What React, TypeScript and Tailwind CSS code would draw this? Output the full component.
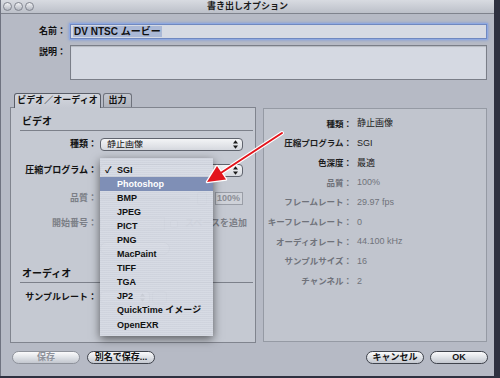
import React from "react";

function Arrows() {
  return (
    <svg width="5" height="9" viewBox="0 0 5 9" className="shrink-0">
      <path d="M2.5 0.3 L5 3.6 L0 3.6 Z" fill="#1a1a1a" />
      <path d="M2.5 8.7 L5 5.4 L0 5.4 Z" fill="#1a1a1a" />
    </svg>
  );
}

function Popup({ width, text, dim }: { width: string; text: string; dim?: boolean }) {
  return (
    <div
      className={`${width} h-[13px] rounded-[4px] border ${dim ? "border-[#9a9ea7] text-[#8a8d94]" : "border-[#60646e] text-[#111]"} bg-gradient-to-b from-[#f3f4f6] to-[#d6d9df] flex items-center pl-[6px] pr-[4px] text-[9px] leading-none`}
    >
      <span className="flex-1 truncate">{text}</span>
      <Arrows />
    </div>
  );
}

function Pill({ width, text, dim }: { width: string; text: string; dim?: boolean }) {
  return (
    <div
      className={`${width} h-[13px] rounded-full border ${dim ? "border-[#8e929b] text-[#8e929b]" : "border-[#3f434c] text-[#111]"} bg-gradient-to-b from-[#fbfbfc] via-[#dfe2e7] to-[#c3c7cf] flex items-center justify-center text-[9px] leading-none font-bold whitespace-nowrap`}
    >
      {text}
    </div>
  );
}

const menuItems = [
  "SGI",
  "Photoshop",
  "BMP",
  "JPEG",
  "PICT",
  "PNG",
  "MacPaint",
  "TIFF",
  "TGA",
  "JP2",
  "QuickTime イメージ",
  "OpenEXR",
];

const infoRows: { label: string; value: string; dark: boolean }[] = [
  { label: "種類：", value: "静止画像", dark: true },
  { label: "圧縮プログラム：", value: "SGI", dark: true },
  { label: "色深度：", value: "最適", dark: true },
  { label: "品質：", value: "100%", dark: false },
  { label: "フレームレート：", value: "29.97 fps", dark: false },
  { label: "キーフレームレート：", value: "0", dark: false },
  { label: "オーディオレート：", value: "44.100 kHz", dark: false },
  { label: "サンプルサイズ：", value: "16", dark: false },
  { label: "チャンネル：", value: "2", dark: false },
];

export default function App() {
  return (
    <div className="w-[500px] h-[378px] bg-[#2e3140] flex overflow-hidden font-['Liberation_Sans','Noto_Sans_CJK_JP',sans-serif] text-[#111]">
      <div className="relative w-[494px] h-[376px] bg-[#b6bac5] flex flex-col border-l border-[#6f7380]">
        {/* title bar */}
        <div className="h-[14px] shrink-0 flex items-center bg-gradient-to-b from-[#d8dbe1] to-[#bcc0c9] border-b border-[#7f838d]">
          <div className="w-[36px] flex gap-[2px] pl-[2px]">
            <div className="w-[9px] h-[9px] rounded-full border border-[#80848e] bg-gradient-to-b from-[#f2f3f5] to-[#b3b7c0]" />
            <div className="w-[9px] h-[9px] rounded-full border border-[#80848e] bg-gradient-to-b from-[#f2f3f5] to-[#b3b7c0]" />
            <div className="w-[9px] h-[9px] rounded-full border border-[#80848e] bg-gradient-to-b from-[#f2f3f5] to-[#b3b7c0]" />
          </div>
          <div className="flex-1 text-center text-[9px] font-bold leading-none text-[#1a1a1a]">書き出しオプション</div>
          <div className="w-[36px]" />
        </div>

        {/* name */}
        <div className="mt-[10px] flex items-center h-[15px]">
          <div className="w-[65px] text-right text-[9px] font-bold leading-none">名前：</div>
          <div className="ml-[4px] mr-[7px] flex-1 h-[15px] border border-[#6f88c0] bg-[#d6dae3] shadow-[0_0_0_1px_#8fa9e0,0_0_3px_1px_#7d9ad8] flex items-center pl-[2px]">
            <span className="bg-[#aab8d6] px-[1px] text-[10px] font-bold leading-[11px]">DV NTSC ムービー</span>
          </div>
        </div>

        {/* description */}
        <div className="mt-[6px] flex h-[35px]">
          <div className="w-[65px] text-right text-[9px] font-bold leading-none pt-[3px]">説明：</div>
          <div className="ml-[4px] mr-[7px] flex-1 h-[35px] border border-[#7a7e88] bg-[#d5d9e2] shadow-[inset_0_1px_1px_rgba(0,0,0,0.15)]" />
        </div>

        {/* tabs */}
        <div className="mt-[12px] h-[15px] flex items-end pl-[13px] gap-[2px] relative z-10">
          <div className="w-[87px] h-[15px] rounded-t-[3px] border border-b-0 border-[#5a5e68] bg-gradient-to-b from-[#d4d7de] to-[#c5c9d2] flex items-center justify-center text-[9px] font-bold leading-none -mb-px pb-px">
            ビデオ／オーディオ
          </div>
          <div className="w-[29px] h-[14px] rounded-t-[3px] border border-b-0 border-[#6e727c] bg-gradient-to-b from-[#c3c7cf] to-[#aeb2bc] flex items-center justify-center text-[9px] font-bold leading-none">
            出力
          </div>
        </div>

        {/* panels */}
        <div className="h-[236px] flex pl-[9px]">
          {/* left panel */}
          <div className="w-[246px] h-[236px] border border-[#80848e] bg-[#c5c9d2] pl-[9px] pr-[2px] flex flex-col">
            <div className="mt-[6px] h-[17px] border-b border-[#7c808a] pl-[2px] text-[10px] font-bold leading-[16px]">ビデオ</div>

            <div className="mt-[7px] h-[13px] flex items-center">
              <div className="w-[77px] text-right text-[9px] font-bold leading-none">種類：</div>
              <div className="ml-[3px]"><Popup width="w-[143px]" text="静止画像" /></div>
            </div>

            <div className="mt-[13px] h-[13px] flex items-center">
              <div className="w-[77px] text-right text-[9px] font-bold leading-none whitespace-nowrap">圧縮プログラム：</div>
              <div className="ml-[3px]"><Popup width="w-[143px]" text="" /></div>
            </div>

            <div className="mt-[15px] h-[13px] flex items-center">
              <div className="w-[77px] text-right text-[9px] font-bold leading-none text-[#7b7e86]">品質：</div>
              <div className="ml-[3px] w-[90px] h-[3px] rounded-full bg-[#9da1aa]" />
              <div className="ml-[7px] w-[10px] h-[13px] border border-[#9da1aa] rounded-[2px]" />
              <div className="ml-[8px] w-[28px] h-[13px] border border-[#9a9ea7] bg-[#cfd2d9] text-right pr-[2px] text-[9px] font-bold leading-[11px] text-[#8b8e95]">100%</div>
            </div>

            <div className="mt-[12px] h-[13px] flex items-center">
              <div className="w-[77px] text-right text-[9px] font-bold leading-none text-[#7b7e86]">開始番号：</div>
              <div className="ml-[3px] w-[65px] h-[13px] border border-[#9a9ea7] bg-[#cfd2d9]" />
              <div className="ml-[5px] w-[8px] h-[8px] border border-[#9a9ea7] rounded-[2px] bg-[#d8dbe1]" />
              <div className="ml-[7px] text-[9px] font-bold leading-none text-[#7b7e86] whitespace-nowrap">スペースを追加</div>
            </div>

            <div className="mt-[12px] h-[13px] flex items-center">
              <div className="ml-[80px]"><Pill width="w-[70px]" text="" dim /></div>
            </div>

            <div className="mt-[11px] h-[17px] border-b border-[#7c808a] pl-[2px] text-[10px] font-bold leading-[16px]">オーディオ</div>

            <div className="mt-[8px] h-[13px] flex items-center">
              <div className="w-[77px] text-right text-[9px] font-bold leading-none whitespace-nowrap">サンプルレート：</div>
              <div className="ml-[3px]"><Popup width="w-[50px]" text="" dim /></div>
              <div className="ml-[2px] w-[15px] h-[13px] border border-[#9a9ea7] rounded-[3px]" />
            </div>
          </div>

          {/* right panel */}
          <div className="ml-[7px] mt-[1px] w-[224px] h-[234px] border border-[#959aa4] bg-[#c1c5ce] pt-[5px] flex flex-col">
            {infoRows.map((r) => (
              <div key={r.label} className="h-[19.7px] flex items-center leading-none">
                <div className={`w-[88px] text-right font-bold whitespace-nowrap text-[8.5px] ${r.dark ? "text-[#1c1c1c]" : "text-[#6f727a]"}`}>{r.label}</div>
                <div className={`ml-[5px] text-[9px] ${r.dark ? "text-[#222]" : "text-[#70737b]"}`}>{r.value}</div>
              </div>
            ))}
          </div>
        </div>

        {/* buttons */}
        <div className="mt-[8px] h-[13px] flex items-center pl-[11px] pr-[6px]">
          <Pill width="w-[68px]" text="保存" dim />
          <div className="ml-[7px]"><Pill width="w-[68px]" text="別名で保存..." /></div>
          <div className="flex-1" />
          <Pill width="w-[58px]" text="キャンセル" />
          <div className="ml-[6px]"><Pill width="w-[58px]" text="OK" /></div>
        </div>

        {/* popup menu */}
        <div className="absolute left-[99px] top-[158px] w-[113px] h-[178px] pt-[5px] bg-[repeating-linear-gradient(0deg,rgba(216,220,229,0.94)_0px,rgba(216,220,229,0.94)_1px,rgba(208,212,222,0.94)_1px,rgba(208,212,222,0.94)_2px)] shadow-[0_3px_9px_rgba(0,0,0,0.55)] flex flex-col">
          {menuItems.map((m, i) => (
            <div
              key={m}
              className={`h-[14.1px] flex items-center text-[9px] font-bold leading-none whitespace-nowrap ${i === 1 ? "bg-[#7f8fb6] text-white" : "text-[#111]"}`}
            >
              <span className="w-[17px] pl-[5px] text-[9px]">{i === 0 ? "✓" : ""}</span>
              <span>{m}</span>
            </div>
          ))}
        </div>

        {/* red arrow */}
        <svg className="absolute left-[-1px] top-0 pointer-events-none" width="494" height="376" viewBox="0 0 494 376">
          <line x1="282" y1="133" x2="220" y2="173.5" stroke="#ffffff" strokeWidth="4" strokeLinecap="round" />
          <polygon points="207,182 226,179.5 217,166" fill="#ffffff" stroke="#ffffff" strokeWidth="2.5" strokeLinejoin="round" />
          <line x1="282" y1="133" x2="220" y2="173.5" stroke="#e3141c" strokeWidth="2" strokeLinecap="round" />
          <polygon points="207,182 226,179.5 217,166" fill="#e3141c" />
        </svg>
      </div>
    </div>
  );
}
